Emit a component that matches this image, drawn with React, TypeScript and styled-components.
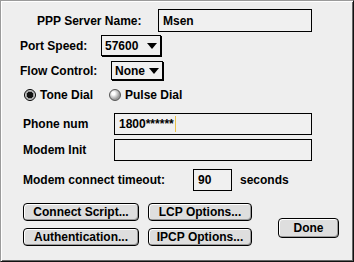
import * as React from 'react';
import styled, { createGlobalStyle } from 'styled-components';

const GlobalStyle = createGlobalStyle`
  html, body {
    margin: 0;
    padding: 0;
    background: #eeeeee;
  }
  * {
    box-sizing: border-box;
  }
`;

const Window = styled.div`
  width: 354px;
  height: 262px;
  background: #eeeeee;
  border-top: 1px solid #9a9a9a;
  border-left: 1px solid #9a9a9a;
  border-right: 1px solid #111;
  border-bottom: 1px solid #111;
  box-shadow: inset 1px 1px 0 #fff, inset -1px -1px 0 #666;
  font-family: 'Liberation Sans', Arial, sans-serif;
  font-weight: bold;
  font-size: 12px;
  color: #000;
  display: flex;
  flex-direction: column;
  padding: 7px 0 0 19px;
`;

const Row = styled.div<{ $top: number; $h: number; $indent?: number }>`
  display: flex;
  align-items: center;
  height: ${(p) => p.$h}px;
  margin-top: ${(p) => p.$top}px;
  padding-left: ${(p) => p.$indent || 0}px;
`;

const Label = styled.span<{ $w: number }>`
  width: ${(p) => p.$w}px;
  flex: none;
  white-space: nowrap;
`;

const Field = styled.div<{ $w: number }>`
  width: ${(p) => p.$w}px;
  height: 100%;
  border: 1px solid #000;
  background: #f0f0f0;
  display: flex;
  align-items: center;
  padding-left: 4px;
`;

const Caret = styled.span`
  display: inline-block;
  width: 1px;
  height: 16px;
  margin-left: 1px;
  background: #e9c24a;
`;

const Popup = styled.div<{ $w: number }>`
  width: ${(p) => p.$w}px;
  height: 100%;
  border: 1px solid #000;
  box-shadow: 1px 1px 0 #000;
  background: #f0f0f0;
  display: flex;
  align-items: center;
  justify-content: space-between;
  padding: 0 3px 0 3px;
`;

const Radio = styled.span<{ $on?: boolean }>`
  width: 12px;
  height: 12px;
  border-radius: 50%;
  flex: none;
  border: 1px solid ${(p) => (p.$on ? '#000' : '#555')};
  background: ${(p) =>
    p.$on
      ? 'radial-gradient(circle at 50% 50%, #111 0 3px, #999 3.5px 4px, #cfcfcf 4.5px)'
      : 'radial-gradient(circle at 35% 35%, #fff 0 1.5px, #dcdcdc 3px, #9a9a9a 6px)'};
  margin-right: 4px;
`;

const RadioLabel = styled.span<{ $w: number }>`
  width: ${(p) => p.$w}px;
  flex: none;
`;

const Suffix = styled.span`
  margin-left: 8px;
`;

const ButtonArea = styled.div`
  display: flex;
  margin-top: 12px;
  padding-left: 3px;
`;

const ButtonGrid = styled.div`
  display: grid;
  grid-template-columns: 116px 104px;
  grid-auto-rows: 18px;
  column-gap: 9px;
  row-gap: 7px;
`;

const Button = styled.div<{ $h?: number }>`
  height: ${(p) => p.$h || 18}px;
  border: 1px solid #000;
  border-radius: 4px;
  background: #dedede;
  box-shadow: inset 1px 1px 0 #fff, inset -1px -1px 0 #9a9a9a;
  display: flex;
  align-items: center;
  justify-content: center;
  white-space: nowrap;
`;

const DoneButton = styled(Button)`
  width: 61px;
  margin-left: 26px;
  margin-top: 15px;
`;

function Arrow() {
  return (
    <svg width="10" height="6" viewBox="0 0 10 6">
      <polygon points="0,0 10,0 5,6" fill="#000" />
    </svg>
  );
}

export default function App() {
  return (
    <>
      <GlobalStyle />
      <Window>
        <Row $top={1} $h={23} $indent={17}>
          <Label $w={121}>PPP Server Name:</Label>
          <Field $w={154}>Msen</Field>
        </Row>
        <Row $top={3} $h={21}>
          <Label $w={81}>Port Speed:</Label>
          <Popup $w={60}>
            57600 <Arrow />
          </Popup>
        </Row>
        <Row $top={5} $h={19}>
          <Label $w={91}>Flow Control:</Label>
          <Popup $w={52}>
            None <Arrow />
          </Popup>
        </Row>
        <Row $top={8} $h={14} $indent={4}>
          <Radio $on />
          <RadioLabel $w={69}>Tone Dial</RadioLabel>
          <Radio />
          <span>Pulse Dial</span>
        </Row>
        <Row $top={11} $h={22} $indent={3}>
          <Label $w={91}>Phone num</Label>
          <Field $w={198}>
            1800******
            <Caret />
          </Field>
        </Row>
        <Row $top={4} $h={22} $indent={3}>
          <Label $w={91}>Modem Init</Label>
          <Field $w={198} />
        </Row>
        <Row $top={8} $h={22} $indent={3}>
          <Label $w={170}>Modem connect timeout:</Label>
          <Field $w={39}>90</Field>
          <Suffix>seconds</Suffix>
        </Row>
        <ButtonArea>
          <ButtonGrid>
            <Button>Connect Script...</Button>
            <Button>LCP Options...</Button>
            <Button>Authentication...</Button>
            <Button>IPCP Options...</Button>
          </ButtonGrid>
          <DoneButton $h={20}>Done</DoneButton>
        </ButtonArea>
      </Window>
    </>
  );
}
